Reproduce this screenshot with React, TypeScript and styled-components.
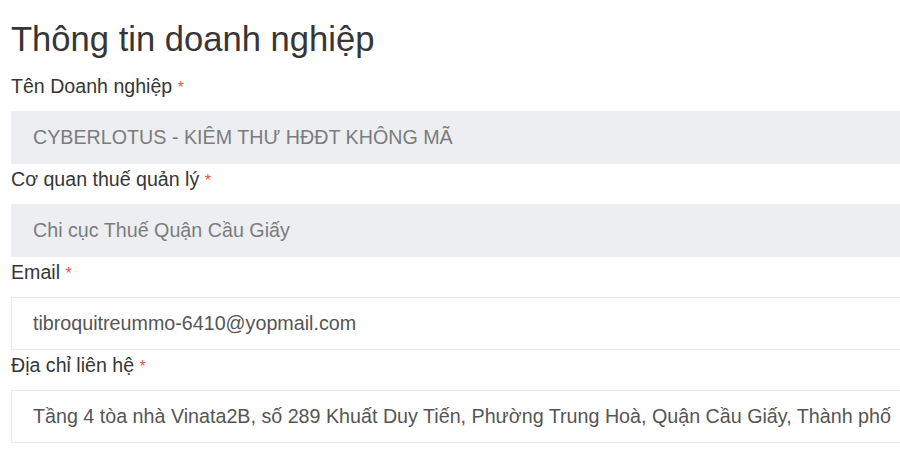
import styled, { createGlobalStyle } from "styled-components";

const GlobalStyle = createGlobalStyle`
  body {
    margin: 0;
    background: #ffffff;
    font-family: "Liberation Sans", Arial, sans-serif;
    overflow: hidden;
  }
`;

const fields = [
  { label: "Tên Doanh nghiệp", value: "CYBERLOTUS - KIÊM THƯ HĐĐT KHÔNG MÃ", disabled: true },
  { label: "Cơ quan thuế quản lý", value: "Chi cục Thuế Quận Cầu Giấy", disabled: true },
  { label: "Email", value: "tibroquitreummo-6410@yopmail.com", disabled: false },
  {
    label: "Địa chỉ liên hệ",
    value: "Tầng 4 tòa nhà Vinata2B, số 289 Khuất Duy Tiến, Phường Trung Hoà, Quận Cầu Giấy, Thành phố Hà Nội",
    disabled: false,
  },
];

export default function App() {
  return (
    <>
      <GlobalStyle />
      <Section>
        <Title>Thông tin doanh nghiệp</Title>
        {fields.map((f) => (
          <Field key={f.label}>
            <Label>
              {f.label} <Required>*</Required>
            </Label>
            <Input $disabled={f.disabled}>
              <Value>{f.value}</Value>
            </Input>
          </Field>
        ))}
      </Section>
    </>
  );
}

const Section = styled.div`
  width: 899px;
  padding: 19px 0 0 11px;
`;

const Title = styled.h2`
  margin: 0 0 12px;
  font-size: 34.6px;
  font-weight: 400;
  line-height: 40px;
  color: #363636;
`;

const Field = styled.div`
  display: flex;
  flex-direction: column;
`;

const Label = styled.label`
  margin: 4px 0 14px;
  font-size: 19.6px;
  line-height: 22px;
  height: 22px;
  color: #363636;
`;

const Required = styled.span`
  color: #e8534f;
  font-size: 16px;
  line-height: 0;
`;

const Input = styled.div<{ $disabled: boolean }>`
  height: 53px;
  box-sizing: border-box;
  display: flex;
  align-items: center;
  padding: 0 14px 0 21px;
  border: 1px solid ${(p) => (p.$disabled ? "#eceef1" : "#e7e9ec")};
  background: ${(p) => (p.$disabled ? "#eceef1" : "#ffffff")};
  color: ${(p) => (p.$disabled ? "#7c7c7c" : "#555555")};
  font-size: 19.7px;
`;

const Value = styled.span`
  flex: 1;
  min-width: 0;
  white-space: nowrap;
  overflow: hidden;
`;
